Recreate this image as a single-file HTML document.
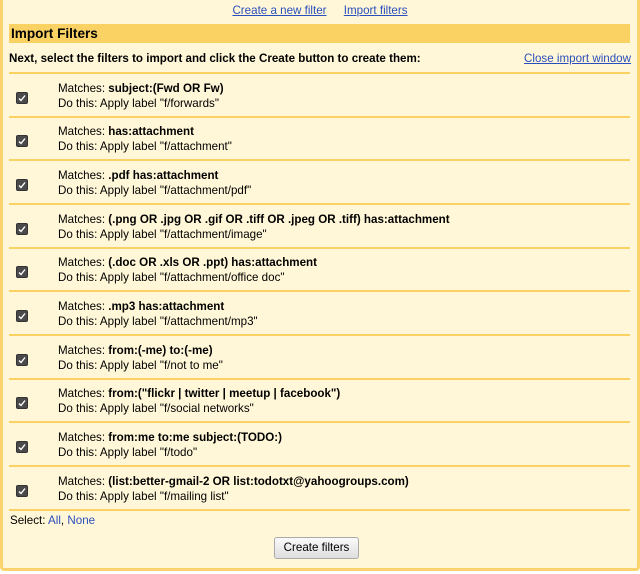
<!DOCTYPE html>
<html><head><style>
body{margin:0;width:640px;height:574px;background:#fff;font-family:"Liberation Sans",Arial,sans-serif;font-size:11.6px;color:#000;overflow:hidden;position:relative}
.frame{position:absolute;left:0;top:0;width:634px;height:568px;background:#fff7d7;border:3px solid #fbd46f;border-top:none;border-radius:0 0 4px 4px}
a{color:#2a4fbd;text-decoration:underline}
.top{position:absolute;top:4px;left:0;width:640px;text-align:center}
.top a{margin:0 7px}
.hdr{position:absolute;left:9px;top:24px;width:621px;height:19px;background:#fad163;font-weight:bold;font-size:13.6px;line-height:19px;padding-left:2px;box-sizing:border-box}
.next{position:absolute;left:9px;top:52px;font-weight:bold}
.close{position:absolute;right:9px;top:52px}
.sep{position:absolute;left:9px;width:621px;height:2px;background:#fad163}
.row{position:absolute;left:0;width:630px}
.cb{position:absolute;left:16px;top:18px;width:10px;height:10px;background:#4a4a4a;border-radius:2px;border:1px solid #333}
.cb svg{position:absolute;left:1px;top:1px}
.t{position:absolute;left:58px;top:7px;line-height:15px}
.sel{position:absolute;left:10px;top:514px}
.sel a{text-decoration:none;color:#2a4fbd}
.btn{position:absolute;left:274px;top:537px;width:83px;height:20px;border:1px solid #aaa;border-radius:3px;background:linear-gradient(#fafafa,#dedede);text-align:center;line-height:20px;font-size:11.6px}
</style></head><body>
<div class="frame"></div>
<div class="top"><a>Create a new filter</a> <a>Import filters</a></div>
<div class="hdr">Import Filters</div>
<div class="next">Next, select the filters to import and click the Create button to create them:</div>
<a class="close">Close import window</a>

<div class="sep" style="top:72px"></div>
<div class="row" style="top:74px"><div class="cb"><svg width="8" height="8"><path d="M1 4.5L3 6.5L7 1.5" stroke="#fff" stroke-width="1.4" fill="none"/></svg></div><div class="t">Matches: <b>subject:(Fwd OR Fw)</b><br>Do this: Apply label "f/forwards"</div></div>
<div class="sep" style="top:116px"></div>
<div class="row" style="top:117px"><div class="cb"><svg width="8" height="8"><path d="M1 4.5L3 6.5L7 1.5" stroke="#fff" stroke-width="1.4" fill="none"/></svg></div><div class="t">Matches: <b>has:attachment</b><br>Do this: Apply label "f/attachment"</div></div>
<div class="sep" style="top:159px"></div>
<div class="row" style="top:161px"><div class="cb"><svg width="8" height="8"><path d="M1 4.5L3 6.5L7 1.5" stroke="#fff" stroke-width="1.4" fill="none"/></svg></div><div class="t">Matches: <b>.pdf has:attachment</b><br>Do this: Apply label "f/attachment/pdf"</div></div>
<div class="sep" style="top:203px"></div>
<div class="row" style="top:205px"><div class="cb"><svg width="8" height="8"><path d="M1 4.5L3 6.5L7 1.5" stroke="#fff" stroke-width="1.4" fill="none"/></svg></div><div class="t">Matches: <b>(.png OR .jpg OR .gif OR .tiff OR .jpeg OR .tiff) has:attachment</b><br>Do this: Apply label "f/attachment/image"</div></div>
<div class="sep" style="top:247px"></div>
<div class="row" style="top:248px"><div class="cb"><svg width="8" height="8"><path d="M1 4.5L3 6.5L7 1.5" stroke="#fff" stroke-width="1.4" fill="none"/></svg></div><div class="t">Matches: <b>(.doc OR .xls OR .ppt) has:attachment</b><br>Do this: Apply label "f/attachment/office doc"</div></div>
<div class="sep" style="top:290px"></div>
<div class="row" style="top:292px"><div class="cb"><svg width="8" height="8"><path d="M1 4.5L3 6.5L7 1.5" stroke="#fff" stroke-width="1.4" fill="none"/></svg></div><div class="t">Matches: <b>.mp3 has:attachment</b><br>Do this: Apply label "f/attachment/mp3"</div></div>
<div class="sep" style="top:334px"></div>
<div class="row" style="top:336px"><div class="cb"><svg width="8" height="8"><path d="M1 4.5L3 6.5L7 1.5" stroke="#fff" stroke-width="1.4" fill="none"/></svg></div><div class="t">Matches: <b>from:(-me) to:(-me)</b><br>Do this: Apply label "f/not to me"</div></div>
<div class="sep" style="top:378px"></div>
<div class="row" style="top:379px"><div class="cb"><svg width="8" height="8"><path d="M1 4.5L3 6.5L7 1.5" stroke="#fff" stroke-width="1.4" fill="none"/></svg></div><div class="t">Matches: <b>from:("flickr | twitter | meetup | facebook")</b><br>Do this: Apply label "f/social networks"</div></div>
<div class="sep" style="top:421px"></div>
<div class="row" style="top:423px"><div class="cb"><svg width="8" height="8"><path d="M1 4.5L3 6.5L7 1.5" stroke="#fff" stroke-width="1.4" fill="none"/></svg></div><div class="t">Matches: <b>from:me to:me subject:(TODO:)</b><br>Do this: Apply label "f/todo"</div></div>
<div class="sep" style="top:465px"></div>
<div class="row" style="top:467px"><div class="cb"><svg width="8" height="8"><path d="M1 4.5L3 6.5L7 1.5" stroke="#fff" stroke-width="1.4" fill="none"/></svg></div><div class="t">Matches: <b>(list:better-gmail-2 OR list:todotxt@yahoogroups.com)</b><br>Do this: Apply label "f/mailing list"</div></div>
<div class="sep" style="top:509px"></div>
<div class="sel">Select: <a>All</a>, <a>None</a></div>
<div class="btn">Create filters</div>
</body></html>
